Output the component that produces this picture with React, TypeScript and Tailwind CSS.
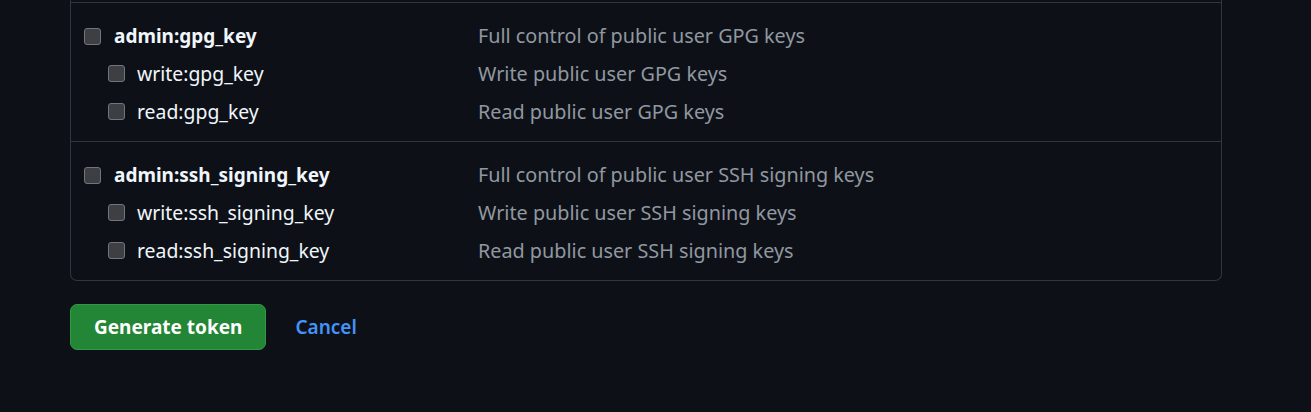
// Scope list tail + form actions for the "new personal access token" page.

import React from "react";

type Scope = {
  name: string;
  description: string;
  children: { name: string; description: string }[];
};

const scopes: Scope[] = [
  {
    name: "admin:gpg_key",
    description: "Full control of public user GPG keys",
    children: [
      { name: "write:gpg_key", description: "Write public user GPG keys" },
      { name: "read:gpg_key", description: "Read public user GPG keys" },
    ],
  },
  {
    name: "admin:ssh_signing_key",
    description: "Full control of public user SSH signing keys",
    children: [
      {
        name: "write:ssh_signing_key",
        description: "Write public user SSH signing keys",
      },
      {
        name: "read:ssh_signing_key",
        description: "Read public user SSH signing keys",
      },
    ],
  },
];

function Box() {
  return (
    <span className="block w-[17px] h-[17px] shrink-0 rounded-[3px] border border-[#6e7681] bg-[#3d3f43]" />
  );
}

function ScopeRow({
  name,
  description,
  parent,
}: {
  name: string;
  description: string;
  parent?: boolean;
}) {
  return (
    <div className="flex items-center h-[38px]">
      <div
        className={`flex items-center w-[395px] ${
          parent ? "pl-[13px]" : "pl-[37px]"
        }`}
      >
        <Box />
        <span
          className={`${
            parent ? "ml-[13px] font-bold" : "ml-[12px] text-[19.4px]"
          } text-[#f0f6fc]`}
        >
          {name}
        </span>
      </div>
      <span className="ml-[12px] text-[19.8px] text-[#9198a1]">{description}</span>
    </div>
  );
}

export default function App() {
  return (
    <div
      className="w-[1311px] h-[412px] bg-[#0d1117] text-[19px] overflow-hidden"
      style={{ fontFamily: '"Noto Sans", "Open Sans", sans-serif' }}
    >
      <div className="ml-[70px] w-[1152px] border-x border-b border-[#30363d] rounded-b-[7px] pt-[2px]">
        {scopes.map((s) => (
          <div key={s.name} className="border-t border-[#30363d] pt-[14px] pb-[10px]">
            <ScopeRow name={s.name} description={s.description} parent />
            {s.children.map((c) => (
              <ScopeRow key={c.name} name={c.name} description={c.description} />
            ))}
          </div>
        ))}
      </div>

      <div className="flex items-center ml-[70px] mt-[23px]">
        <button
          type="button"
          className="h-[46px] px-[23px] rounded-[7px] bg-[#238636] border border-[#2f9a44] text-white font-bold"
        >
          Generate token
        </button>
        <button type="button" className="ml-[29px] text-[#4493f8] font-semibold">
          Cancel
        </button>
      </div>
    </div>
  );
}
